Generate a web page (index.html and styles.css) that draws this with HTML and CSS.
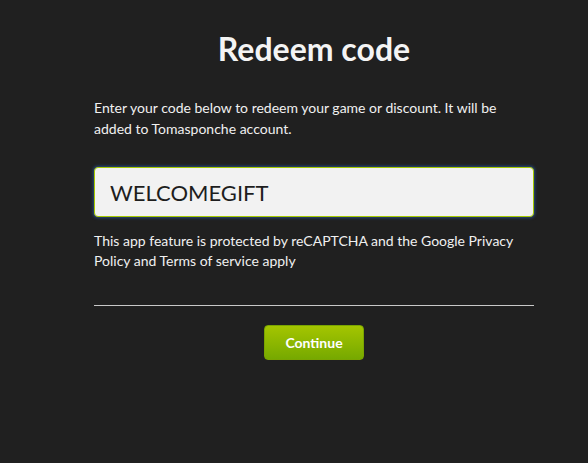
FILE: index.html
```html
<!DOCTYPE html>
<html>
<head>
<meta charset="utf-8">
<link rel="stylesheet" href="styles.css">
</head>
<body>
<main class="redeem">
  <h1 class="title">Redeem code</h1>
  <p class="intro">Enter your code below to redeem your game or discount. It will be added to Tomasponche account.</p>
  <div class="field">
    <input class="code-input" type="text" value="WELCOMEGIFT">
  </div>
  <p class="notice">This app feature is protected by reCAPTCHA and the Google Privacy Policy and Terms of service apply</p>
  <hr class="divider">
  <div class="actions">
    <button class="continue" type="button">Continue</button>
  </div>
</main>
</body>
</html>
```
FILE: styles.css
```css
html, body {
  margin: 0;
  padding: 0;
  background: #202020;
  height: 100%;
}
body {
  font-family: Lato, "Open Sans", sans-serif;
  color: #f0f0f0;
}
.redeem {
  width: 440px;
  margin-left: 94px;
  padding-top: 30px;
  display: flex;
  flex-direction: column;
}
.title {
  margin: 0;
  font-size: 32px;
  line-height: 38px;
  font-weight: 700;
  text-align: center;
  color: #f4f4f4;
}
.intro {
  margin: 29px 0 0;
  font-size: 14px;
  line-height: 21px;
}
.field {
  margin-top: 28px;
}
.code-input {
  box-sizing: border-box;
  width: 440px;
  height: 50px;
  margin: 0;
  padding: 0 15px;
  border: 1px solid #a6c800;
  border-radius: 4px;
  background: #f2f2f2;
  box-shadow: 0 0 3px 1px rgba(40, 90, 160, 0.75);
  font-family: Lato, "Open Sans", sans-serif;
  font-size: 22px;
  color: #1e1e1e;
  outline: none;
}
.notice {
  margin: 14px 0 0;
  font-size: 14px;
  line-height: 20px;
}
.divider {
  margin: 34px 0 0;
  border: 0;
  height: 1px;
  background: #c8c8c8;
}
.actions {
  display: flex;
  justify-content: center;
  margin-top: 19px;
}
.continue {
  width: 100px;
  height: 35px;
  border: 1px solid #7aa400;
  border-radius: 4px;
  background: linear-gradient(#a4c500, #76a900);
  color: #ffffff;
  font-family: Lato, "Open Sans", sans-serif;
  font-size: 14px;
  font-weight: 700;
  padding: 0;
  cursor: pointer;
}
```
